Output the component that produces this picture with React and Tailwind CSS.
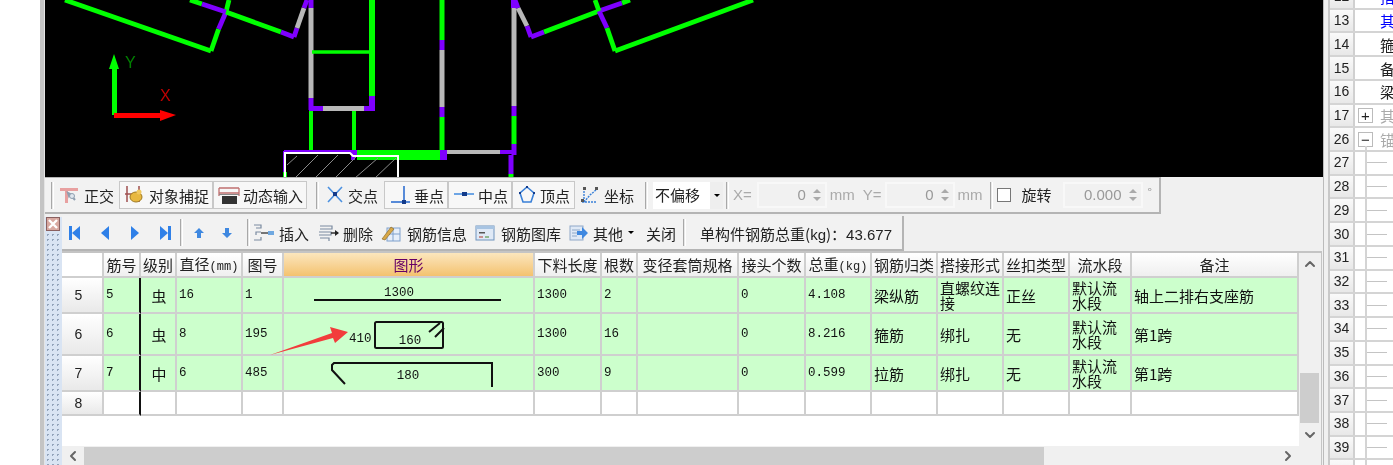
import React from "react";
import { ChevronUp, ChevronDown, ChevronLeft, ChevronRight } from "lucide-react";

const P = "#7f00ff", G = "#00ff00", Y = "#b8b8b8";
const segs = [
  // left slanted beam
  [65,0,211,51,G,4],[211,51,218.6,29,G,4],[218.6,29,226,12,P,4],[226,12,229,0,G,4],
  [190,0,202,4,G,4],[202,4,226,12,P,4],[226,12,281,32,G,4],[281,32,294,37,P,4],[294,37,297,28,P,4],[297,28,304,8,Y,4],[304,8,307,0,P,4],
  // left verticals
  [311,0,311,8,P,5],[311,8,311,98,Y,5],[311,98,311,110,P,5],
  [309,108.5,323,108.5,P,5],[323,108.5,364,108.5,Y,5],[364,108.5,375,108.5,P,5],
  [372,0,372,96,G,6],[372,96,372,110,P,6],
  [312,52,369,52,G,3.5],
  [311,111,311,151,G,4],[354,111,354,151,G,4],
  // centre
  [442,0,442,40,G,5],[442,40,442,50,P,5],[442,50,442,107,Y,5],[442,107,442,117,P,5],[442,117,442,150,G,5],
  [357,155,440,155,G,10],[440,155,447,155,P,10],
  [447,152,500,152,Y,4],[500,152,516,152,P,4],
  [514,0,514,8,P,6],[514,8,514,106,Y,5],[514,106,514,116,P,5],[514,116,514,144,G,5],[514,144,514,155,P,5],
  [511,155,511,174,P,5],[511,174,511,177,G,5],
  // right slanted beam
  [518,8,527,26,Y,4],[515,0,518,8,P,4],[527,26,531,37,P,4],[531,37,544,32,P,4],[544,32,599,11,G,4],[599,11,622,3,P,4],[622,3,630,0,G,4],
  [599,11,607,28,P,4],[607,28,615,51,G,4],[615,51,753,0,G,4],[599,11,595,0,G,4],
  // hatched opening
  [284,151,354,151,P,2],[284,151,284,176,P,2],[351,153,357,153,P,6],[351,157,355,157,P,6],[285,172,285,177,G,4],
];

function Cad() {
  return (
    <svg viewBox="45 0 1278 177" className="block w-[1278px] h-[177px] bg-black" shapeRendering="crispEdges">
      {segs.map((s, i) => (
        <line key={i} x1={s[0]} y1={s[1]} x2={s[2]} y2={s[3]} stroke={s[4]} strokeWidth={s[5] === 4 && s[1] !== s[3] && s[0] !== s[2] ? 4.8 : s[5]} shapeRendering="auto" />
      ))}
      {[[287,165,297,156],[295,178,318,155],[315,178,338,155],[335,178,356,157],[355,178,378,158],[375,178,396,158]].map((l, i) => (
        <line key={i} x1={l[0]} y1={l[1]} x2={l[2]} y2={l[3]} stroke="#8a8a8a" strokeWidth="1" shapeRendering="auto" />
      ))}
      <polyline points="285,177 285,153 350,153 353,156 398,156 398,177" fill="none" stroke="#fff" strokeWidth="2" shapeRendering="auto" />
      <line x1="114" y1="115" x2="114" y2="68" stroke={G} strokeWidth="5" />
      <polygon points="114,54 119,69 109,69" fill={G} shapeRendering="auto" />
      <line x1="114" y1="115" x2="161" y2="115" stroke="#ff0000" strokeWidth="5" />
      <polygon points="176,115 160,110 160,121" fill="#ff0000" shapeRendering="auto" />
      <text x="125" y="68" fill="#008000" fontSize="16" fontFamily="Liberation Sans" fontWeight="300">Y</text>
      <text x="160" y="101" fill="#c00000" fontSize="16" fontFamily="Liberation Sans" fontWeight="300">X</text>
    </svg>
  );
}

const Sep = () => (
  <div className="w-[3px] h-[27px] shrink-0 border-l border-r border-l-[#a8a8a8] border-r-white bg-[#e8e8e8]" />
);

const I = ({ children, w = 20 }) => (
  <svg width={w} height="20" viewBox={`0 0 ${w} 20`} className="shrink-0">{children}</svg>
);

const icons = {
  ortho: (
    <I w={22}>
      <path d="M1 3h18v3H1zM6 3h3v15H6z" fill="#e8a0a0" />
      <path d="M11 9l-2-1 1 3zM11 9l5 6" stroke="#8f9fb0" strokeWidth="2" fill="none" />
      <circle cx="13" cy="11" r="2.5" fill="#dfe6ee" stroke="#8f9fb0" />
    </I>
  ),
  snap: (
    <I w={22}>
      <path d="M3 1v16M15 1v16M1 9h16" stroke="#a05050" strokeWidth="1.5" />
      <ellipse cx="12" cy="12" rx="6" ry="5" fill="#e8b840" stroke="#a07a20" />
      <circle cx="15" cy="7" r="2.5" fill="#f0c860" />
    </I>
  ),
  dyn: (
    <I w={22}>
      <path d="M1 3h20M1 8h20M1 3v8M21 3v8" stroke="#c07070" strokeWidth="1.3" fill="none" />
      <rect x="4" y="11" width="15" height="8" fill="#333" />
      <rect x="1" y="9" width="20" height="1" fill="#888" />
    </I>
  ),
  cross: (
    <I><path d="M3 2l14 15M17 2L3 17" stroke="#4a90e0" strokeWidth="1.6" /><rect x="8" y="7" width="4" height="4" fill="#123a8a" /></I>
  ),
  perp: (
    <I w={22}><path d="M2 17h19" stroke="#2f6fd0" strokeWidth="1.6" /><path d="M15 1v18" stroke="#2f6fd0" strokeWidth="1.6" /><rect x="13" y="15" width="4" height="4" fill="#123a8a" /></I>
  ),
  mid: (
    <I w={22}><path d="M1 9h20" stroke="#4a90e0" strokeWidth="1.6" /><rect x="9" y="7" width="5" height="4" fill="#123a8a" /></I>
  ),
  vertex: (
    <I><path d="M10 2l7 6-3 9H6L3 8z" fill="none" stroke="#3a80d8" strokeWidth="1.6" /><g fill="#123a8a"><rect x="9" y="1" width="2" height="2" /><rect x="2" y="7" width="2" height="2" /><rect x="16" y="7" width="2" height="2" /></g></I>
  ),
  coord: (
    <I w={22}><path d="M5 3v14M3 17h14M5 17l6-7 6-5" stroke="#3a80d8" strokeWidth="1.4" fill="none" strokeDasharray="2 1" /><g fill="#555"><rect x="4" y="2" width="3" height="3" /><rect x="16" y="2" width="3" height="3" /><rect x="2" y="14" width="3" height="3" /></g></I>
  ),
  insert: (
    <I w={22}><path d="M1 2h7v3H3M8 9H3v3M1 17h7v-3" fill="none" stroke="#7a8aa0" strokeWidth="1.2" /><path d="M8 10h7" stroke="#222" strokeWidth="1.2" /><rect x="15" y="8" width="6" height="4" fill="#6fa8e0" /></I>
  ),
  del: (
    <I w={22}><path d="M2 3h12v3H2M1 9h12v3H1M2 15h9v3" fill="none" stroke="#7a8aa0" strokeWidth="1.2" /><path d="M13 10h7" stroke="#222" strokeWidth="1.4" /><path d="M17 7l4 3-4 3z" fill="#222" /></I>
  ),
  info: (
    <I><rect x="6" y="5" width="13" height="13" fill="#e6eefa" stroke="#7ea0cc" /><path d="M12 5v13M6 11h13" stroke="#7ea0cc" /><path d="M1 16L10 4l3 2-9 11z" fill="#d8a848" stroke="#806020" strokeWidth=".6" /></I>
  ),
  lib: (
    <I><rect x="1" y="3" width="18" height="14" fill="#dfe9f6" stroke="#6f93bd" /><rect x="1" y="3" width="18" height="3" fill="#a8c4e2" /><rect x="4" y="9" width="6" height="1.5" fill="#555" /><rect x="4" y="13" width="4" height="2" fill="#c89090" /><rect x="10" y="13" width="4" height="2" fill="#90b890" /></I>
  ),
  other: (
    <I><rect x="1" y="3" width="13" height="14" fill="#dfe9f6" stroke="#8fa8c8" /><path d="M3 7h8M3 10h5M3 13h5" stroke="#8fa8c8" /><path d="M8 8h5V4l6 6-6 6v-4H8z" fill="#3f88e0" /></I>
  ),
};

function ToolBtn({ icon, label, w, boxed }) {
  return (
    <div className={`h-[28px] flex items-center pl-[4px] gap-[3px] shrink-0 ${w} ${boxed ? "bg-[#f7f7f7] border border-[#c8c8c8]" : ""}`}>
      {icons[icon]}
      <span className="text-[15px] leading-none text-[#222] whitespace-nowrap">{label}</span>
    </div>
  );
}

function Spin({ w, val }) {
  return (
    <div className={`h-[26px] ${w} shrink-0 bg-[#f1f1f1] border-2 border-[#f8f8f8] flex items-center justify-end text-[15px] text-[#999] pr-[2px]`}>
      <span className="font-['Liberation_Sans']">{val}</span>
      <div className="flex flex-col ml-[7px] gap-[4px] mr-[2px]">
        <div className="w-0 h-0 border-x-[4px] border-x-transparent border-b-[4px] border-b-[#aaa]" />
        <div className="w-0 h-0 border-x-[4px] border-x-transparent border-t-[4px] border-t-[#aaa]" />
      </div>
    </div>
  );
}

function Toolbar1() {
  const g = "text-[15px] text-[#aaa] font-['Liberation_Sans'] shrink-0";
  return (
    <div className="h-[37px] w-[1116px] border-t border-b-2 border-r-2 border-[#b4b4b4] bg-[#f2f2f2] flex items-center pl-[6px]">
      <Sep />
      <div className="w-[1px]" />
      <ToolBtn icon="ortho" label="正交" w="w-[64px]" />
      <ToolBtn icon="snap" label="对象捕捉" w="w-[94px]" boxed />
      <ToolBtn icon="dyn" label="动态输入" w="w-[94px]" boxed />
      <div className="w-[9px]" /><Sep /><div className="w-[2px]" />
      <ToolBtn icon="cross" label="交点" w="w-[63px]" />
      <ToolBtn icon="perp" label="垂点" w="w-[64px]" boxed />
      <ToolBtn icon="mid" label="中点" w="w-[64px]" boxed />
      <ToolBtn icon="vertex" label="顶点" w="w-[63px]" boxed />
      <ToolBtn icon="coord" label="坐标" w="w-[64px]" />
      <div className="w-[6px]" /><Sep />
      <div className="ml-[5px] w-[70px] h-[27px] bg-white flex items-center pl-[2px] text-[15px] text-[#222] relative shrink-0">
        不偏移
        <div className="absolute right-0 top-0 h-full w-[13px] bg-[#eee] flex items-center justify-center">
          <div className="w-0 h-0 border-x-[3px] border-x-transparent border-t-[3px] border-t-black" />
        </div>
      </div>
      <div className="w-[3px]" /><Sep />
      <span className={`${g} ml-[4px]`}>X=</span>
      <div className="w-[5px]" />
      <Spin w="w-[70px]" val="0" />
      <span className={`${g} ml-[3px]`}>mm</span>
      <span className={`${g} ml-[8px]`}>Y=</span>
      <div className="w-[3px]" />
      <Spin w="w-[70px]" val="0" />
      <span className={`${g} ml-[3px]`}>mm</span>
      <div className="w-[7px]" /><Sep />
      <div className="ml-[4px] w-[14px] h-[14px] bg-white border border-[#777] shrink-0" />
      <span className="ml-[11px] text-[15px] text-[#222] shrink-0">旋转</span>
      <div className="w-[11px]" />
      <Spin w="w-[80px]" val="0.000" />
      <span className="ml-[5px] text-[12px] text-[#999] -mt-[6px]">°</span>
    </div>
  );
}

const Tri = ({ d, bar }) => (
  <svg width="16" height="18" viewBox="0 0 16 18" className="shrink-0">
    {d === "l" ? <path d="M12 2v14L4 9z" fill="#2f80e8" /> : <path d="M4 2v14l8-7z" fill="#2f80e8" />}
    {bar && <rect x={d === "l" ? 1 : 12} y="2" width="3" height="14" fill="#2f80e8" />}
  </svg>
);
const Arrow = ({ down }) => (
  <svg width="14" height="14" viewBox="0 0 14 14" className="shrink-0">
    <path d={down ? "M5 2h4v5h3l-5 5-5-5h3z" : "M5 12h4V7h3L7 2 2 7h3z"} fill="#3f88e0" />
  </svg>
);

function Toolbar2() {
  const t = "text-[15px] leading-none text-[#222] whitespace-nowrap shrink-0 mt-[2px]";
  return (
    <div className="h-[35px] w-[842px] border-r-2 border-b-2 border-[#b4b4b4] bg-[#f2f2f2] flex items-center">
      <div className="ml-[6px]"><Tri d="l" bar /></div>
      <div className="ml-[13px]"><Tri d="l" /></div>
      <div className="ml-[14px]"><Tri d="r" /></div>
      <div className="ml-[13px]"><Tri d="r" bar /></div>
      <div className="ml-[8px]"><Sep /></div>
      <div className="ml-[9px]"><Arrow /></div>
      <div className="ml-[14px]"><Arrow down /></div>
      <div className="ml-[13px]"><Sep /></div>
      <div className="ml-[3px]">{icons.insert}</div>
      <span className={`${t} ml-[4px]`}>插入</span>
      <div className="ml-[9px]">{icons.del}</div>
      <span className={`${t} ml-[3px]`}>删除</span>
      <div className="ml-[8px]">{icons.info}</div>
      <span className={`${t} ml-[6px]`}>钢筋信息</span>
      <div className="ml-[8px]">{icons.lib}</div>
      <span className={`${t} ml-[6px]`}>钢筋图库</span>
      <div className="ml-[8px]">{icons.other}</div>
      <span className={`${t} ml-[4px]`}>其他</span>
      <div className="ml-[5px] w-0 h-0 border-x-[3px] border-x-transparent border-t-[3px] border-t-black" />
      <span className={`${t} ml-[12px]`}>关闭</span>
      <div className="ml-[7px]"><Sep /></div>
      <span className={`${t} ml-[14px]`}>单构件钢筋总重(<span className="font-['Liberation_Sans']">kg</span>)：<span className="font-['Liberation_Sans']">43.677</span></span>
    </div>
  );
}

const cols = "grid-cols-[42px_37px_36px_66px_41px_251px_67px_36px_101px_67px_66px_66px_66px_66px_62px_167px]";
const heads = ["", "筋号", "级别", "直径(mm)", "图号", "图形", "下料长度", "根数", "变径套筒规格", "接头个数", "总重(kg)", "钢筋归类", "搭接形式", "丝扣类型", "流水段", "备注"];

const mono = "font-['Liberation_Mono','Noto_Sans_CJK_SC',monospace] text-[12.5px]";

function Fig({ n }) {
  const f = { fontFamily: "Liberation Mono", fontSize: 12.5, fill: "#111" };
  if (n === 5)
    return (
      <svg className="block w-full h-full" viewBox="0 0 249 34">
        <text x="115" y="18" textAnchor="middle" {...f}>1300</text>
        <line x1="30" y1="22" x2="217" y2="22" stroke="#111" strokeWidth="2" />
      </svg>
    );
  if (n === 6)
    return (
      <svg className="block w-full h-full" viewBox="0 0 249 40">
        <text x="65" y="28" {...f}>410</text>
        <rect x="91" y="8" width="68" height="26" rx="1.5" fill="none" stroke="#111" strokeWidth="2" />
        <path d="M145 18l11-9M151 23l9-9" stroke="#111" strokeWidth="2" fill="none" />
        <text x="126" y="30" textAnchor="middle" {...f}>160</text>
      </svg>
    );
  return (
    <svg className="block w-full h-full" viewBox="0 0 249 34">
      <path d="M61 28L48 14v-5l2-2h158v24" stroke="#111" strokeWidth="2" fill="none" />
      <text x="124" y="23" textAnchor="middle" {...f}>180</text>
    </svg>
  );
}

const rows = [
  { n: 5, vals: ["5", "虫", "16", "1", null, "1300", "2", "", "0", "4.108", "梁纵筋", "直螺纹连接", "正丝", "默认流水段", "轴上二排右支座筋"] },
  { n: 6, vals: ["6", "虫", "8", "195", null, "1300", "16", "", "0", "8.216", "箍筋", "绑扎", "无", "默认流水段", "第1跨"] },
  { n: 7, vals: ["7", "中", "6", "485", null, "300", "9", "", "0", "0.599", "拉筋", "绑扎", "无", "默认流水段", "第1跨"] },
];

function Table() {
  const line = "border-r-2 border-b-2 border-[#cfcfcf]";
  const rowHead = `${line} bg-gradient-to-b from-white to-[#e9e9e9] flex items-center justify-center pr-[7px] font-['Liberation_Sans'] text-[14px] text-[#222]`;
  return (
    <div className="relative h-[214px] w-[1260px] border-t-2 border-r border-[#c4c4c4] flex flex-col bg-[#f0f0f0]">
      <div className="flex h-[193px]">
        <div className="w-[1237px] h-full bg-white">
          <div className={`grid ${cols} grid-rows-[25px_36px_42px_36px_24px]`}>
            {heads.map((h, i) => (
              <div key={i} className={`${line} flex items-center justify-center whitespace-nowrap text-[15px] leading-none ${i === 5 ? "bg-gradient-to-b from-[#fbe6bd] to-[#f4c26e] text-[#660066]" : i === 0 ? "bg-white" : "bg-gradient-to-b from-white to-[#efefef] text-[#222]"}`}>
                {h.includes("(") ? (
                  <span>{h.split("(")[0]}<span className="font-['Liberation_Mono'] text-[12px]">({h.split("(")[1]}</span></span>
                ) : h}
              </div>
            ))}
            {rows.map((r) => (
              <React.Fragment key={r.n}>
                <div className={rowHead}>{r.n}</div>
                {r.vals.map((v, i) => {
                  const cjk = i >= 10 || i === 1;
                  return (
                    <div key={i} className={`${line} bg-[#ccffcc] min-w-0 ${i === 0 ? "border-r-[#111]" : ""} ${i === 4 ? "" : `flex items-center pl-[2px] ${cjk ? "" : "pt-[1px]"}`} ${i === 1 ? "justify-center" : ""} text-[#111] ${cjk ? "text-[15px] leading-[15px] overflow-hidden" : mono}`}>
                      {v === null ? <Fig n={r.n} /> : v}
                    </div>
                  );
                })}
              </React.Fragment>
            ))}
            <div className={rowHead}>8</div>
            {Array.from({ length: 15 }).map((_, i) => (
              <div key={i} className={`${line} bg-white ${i === 0 ? "border-r-[#111]" : ""}`} />
            ))}
          </div>
        </div>
        <div className="w-[21px] h-full flex flex-col items-end">
          <div className="w-full h-[22px] flex items-center justify-center"><ChevronUp size={16} strokeWidth={3} className="text-[#666]" /></div>
          <div className="h-[98px]" />
          <div className="w-[19px] h-[50px] bg-[#cdcdcd] mr-[1px]" />
          <div className="w-full flex-1 flex items-center justify-center"><ChevronDown size={16} strokeWidth={3} className="text-[#666]" /></div>
        </div>
      </div>
      <div className="flex-1 flex items-center pr-[25px]">
        <div className="w-[22px] flex justify-center"><ChevronLeft size={16} strokeWidth={3} className="text-[#666]" /></div>
        <div className="w-[960px] h-[18px] bg-[#cdcdcd]" />
        <div className="flex-1" />
        <ChevronRight size={16} strokeWidth={3} className="text-[#666]" />
      </div>
      <svg className="absolute left-[208px] top-[72px]" width="80" height="32" viewBox="0 0 80 32">
        <path d="M0 30L62 8l-2-6 18 5-13 11-2-5z" fill="#f23c3c" />
      </svg>
    </div>
  );
}

function Grip() {
  return (
    <div className="w-[17px] mt-[3px] bg-[#d9e4f3] bg-[radial-gradient(#93a4bb_1px,transparent_1px)] bg-[size:5px_5px] pl-[1px]">
      <svg width="14" height="14" viewBox="0 0 14 14">
        <rect x="0.5" y="0.5" width="13" height="13" fill="#d8a8a0" stroke="#8a6060" />
        <path d="M3 3l8 8M11 3l-8 8" stroke="#fff" strokeWidth="2.4" />
      </svg>
    </div>
  );
}

const sideRows = [
  ["12", "搭", "blue"], ["13", "其", "blue"], ["14", "箍", ""], ["15", "备", ""], ["16", "梁", ""], ["17", "其", "gray", "+"], ["26", "锚", "gray", "−"],
  ...Array.from({ length: 14 }, (_, i) => [String(27 + i), "", "tree"]),
];

function Side() {
  return (
    <div className="w-[65px] h-[465px] overflow-hidden border-l-2 border-[#c8c8c8] bg-white">
      <div className="-mt-[14px]">
        {sideRows.map(([n, t, kind, box]) => (
          <div key={n} className="h-[23.72px] flex border-b-2 border-[#d4d4d4] relative">
            <div className="w-[25px] shrink-0 bg-gradient-to-b from-[#fafafa] to-[#e8e8e8] border-r-2 border-[#d0d0d0] flex items-center justify-center font-['Liberation_Sans'] text-[14px] text-[#222]">{n}</div>
            {kind === "tree" ? (
              <>
                <div className="w-[12px] shrink-0 border-r-2 border-[#d4d4d4]" />
                <div className="w-[20px] h-[1px] bg-[#c4c4c4] self-center shrink-0" />
                <span className="w-[4px] overflow-hidden shrink-0 text-[15px] leading-none text-[#8888ff] self-center ml-[6px]">纵</span>
              </>
            ) : (
              <>
                <div className="w-[25px] shrink-0 flex items-center pl-[3px]">
                  {box && (
                    <div className="w-[15px] h-[15px] border border-[#bbb] flex items-center justify-center text-[15px] leading-none text-[#222] font-['Liberation_Sans']">{box}</div>
                  )}
                </div>
                <span className={`text-[15px] leading-none self-center whitespace-nowrap ${kind === "blue" ? "text-[#0000ff]" : kind === "gray" ? "text-[#aaa]" : "text-[#222]"}`}>{t}</span>
              </>
            )}
            {box === "−" && <div className="absolute left-[35px] bottom-[-2px] h-[6px] w-[2px] bg-[#d4d4d4]" />}
          </div>
        ))}
      </div>
    </div>
  );
}

export default function App() {
  return (
    <div className="w-[1393px] h-[465px] flex overflow-hidden bg-white font-['Noto_Sans_CJK_SC','Liberation_Sans',sans-serif] blur-[0.35px]">
      <div className="w-[40px] shrink-0 bg-white" />
      <div className="w-[5px] shrink-0 bg-[#c4c4c4] border-r border-[#e4e4e4]" />
      <div className="w-[1278px] shrink-0 bg-[#f0f0f0] flex flex-col">
        <Cad />
        <Toolbar1 />
        <div className="flex flex-1 min-h-0">
          <Grip />
          <div className="flex-1 pt-[2px]">
            <Toolbar2 />
            <Table />
          </div>
        </div>
      </div>
      <div className="w-[5px] shrink-0 bg-[#f0f0f0] border-l border-[#bbb]" />
      <Side />
    </div>
  );
}
